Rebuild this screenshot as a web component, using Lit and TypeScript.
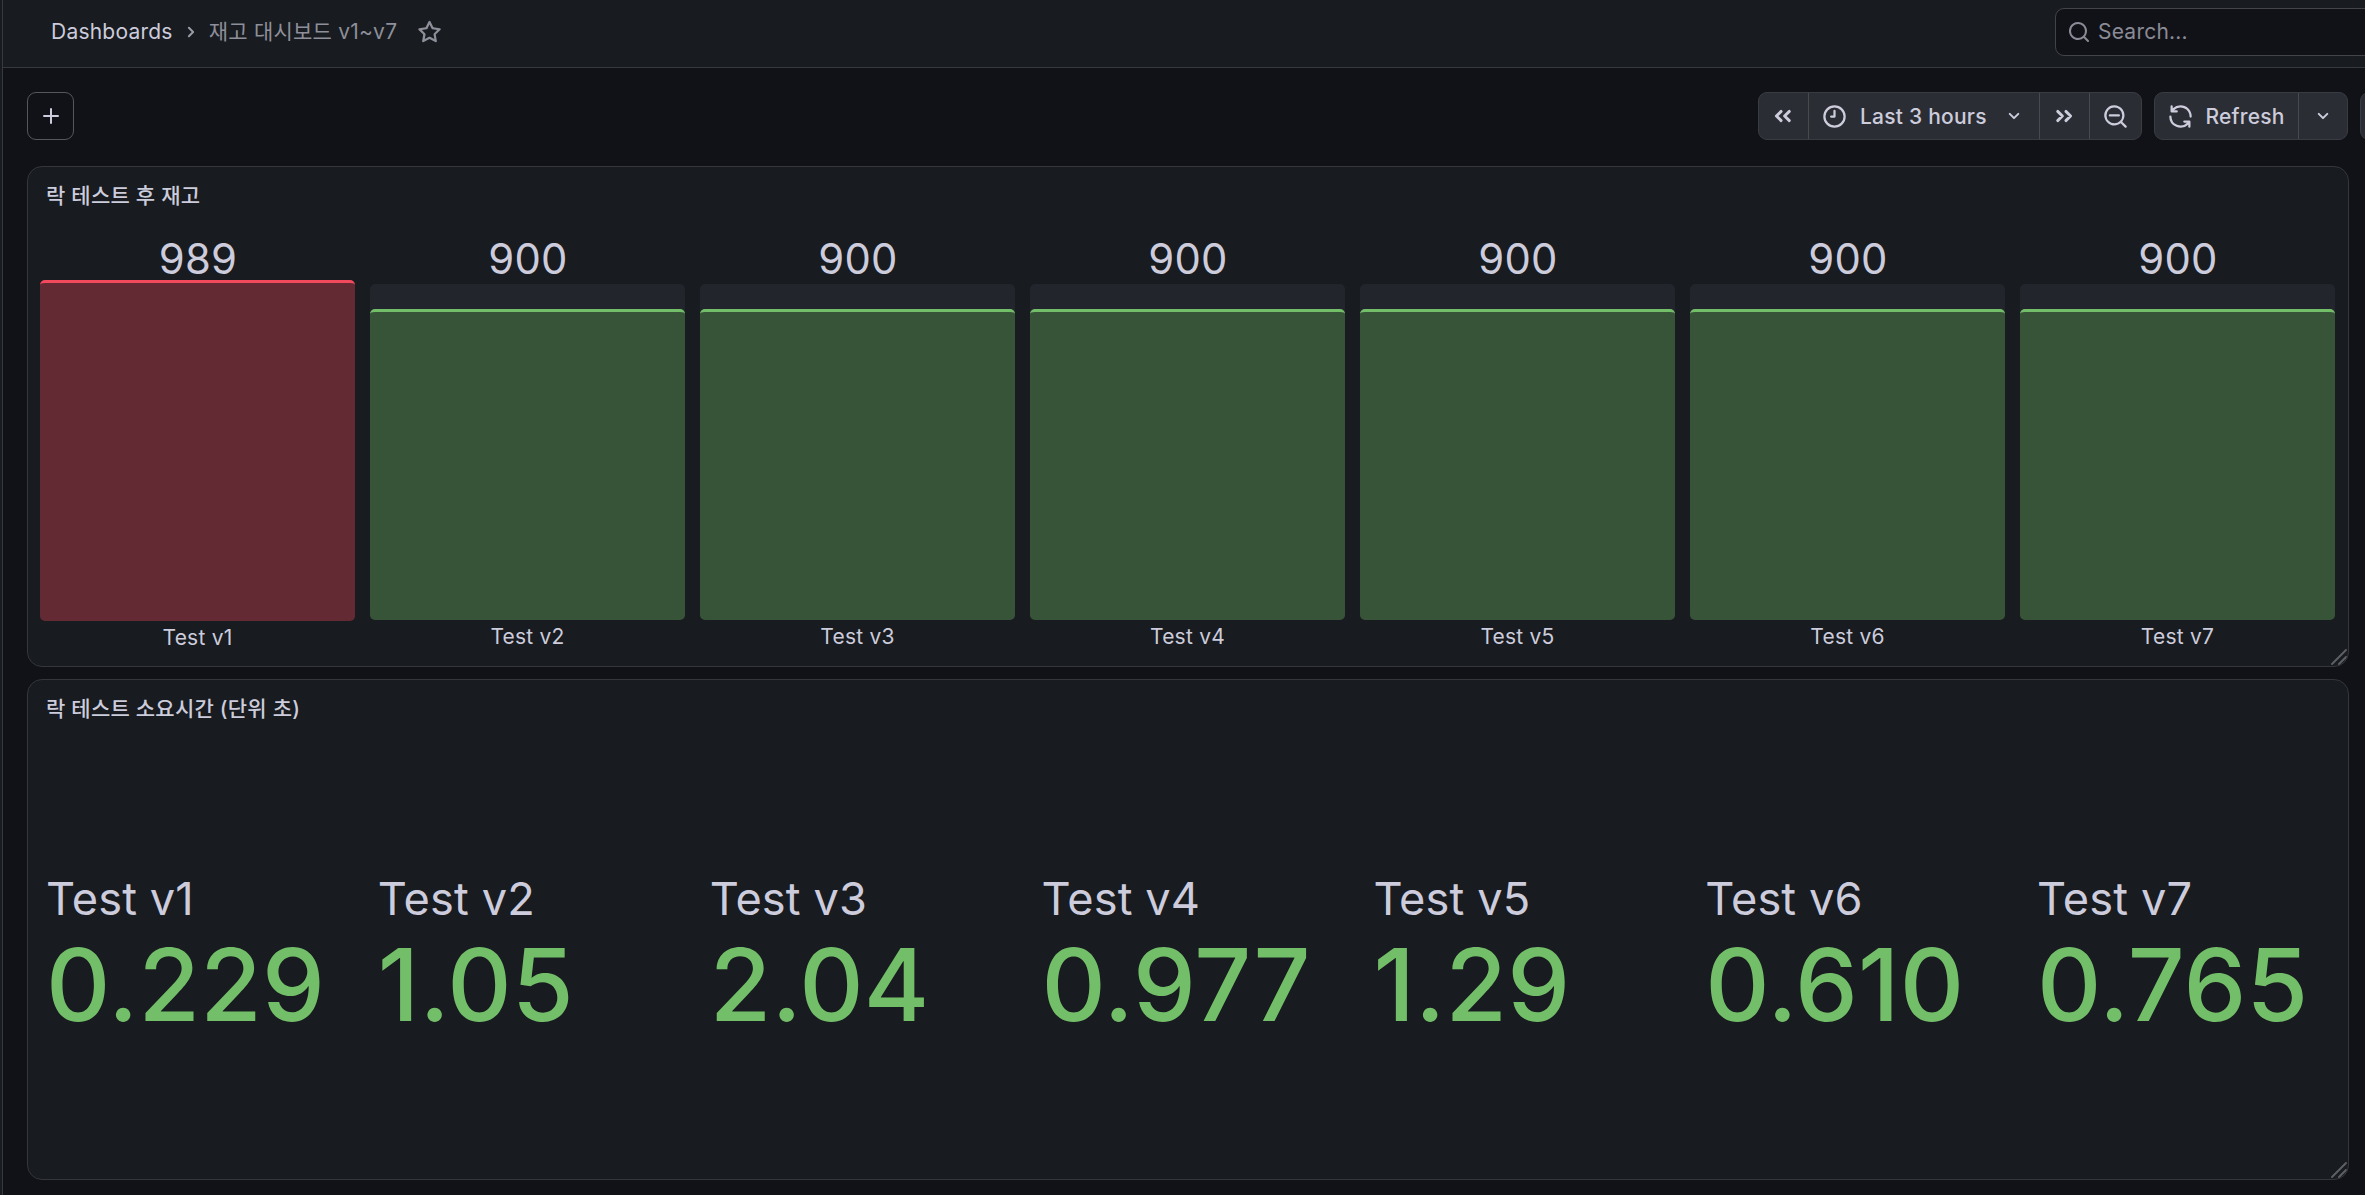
import { LitElement, html, css, svg } from "lit";
import { customElement, property } from "lit/decorators.js";
import { classMap } from "lit/directives/class-map.js";
import { styleMap } from "lit/directives/style-map.js";

const ICONS: Record<string, string> = {
  plus: "M19,11H13V5a1,1,0,0,0-2,0v6H5a1,1,0,0,0,0,2h6v6a1,1,0,0,0,2,0V13h6a1,1,0,0,0,0-2Z",
  star: "M22,9.67A1,1,0,0,0,21.14,9l-5.69-.83L12.9,3a1,1,0,0,0-1.8,0L8.55,8.16,2.86,9a1,1,0,0,0-.81.68,1,1,0,0,0,.25,1l4.13,4-1,5.68A1,1,0,0,0,6.9,21.44L12,18.77l5.1,2.67a.93.93,0,0,0,.46.12,1,1,0,0,0,.59-.19,1,1,0,0,0,.4-1l-1-5.68,4.13-4A1,1,0,0,0,22,9.67Zm-6.15,4a1,1,0,0,0-.29.88l.72,4.2-3.76-2a1.06,1.06,0,0,0-.94,0l-3.76,2,.72-4.2a1,1,0,0,0-.29-.88l-3-3,4.21-.61a1,1,0,0,0,.76-.55L12,5.7l1.88,3.82a1,1,0,0,0,.76.55l4.21.61Z",
  search: "M21.71,20.29,18,16.61A9,9,0,1,0,16.61,18l3.68,3.68a1,1,0,0,0,1.42,0A1,1,0,0,0,21.71,20.29ZM11,18a7,7,0,1,1,7-7A7,7,0,0,1,11,18Z",
  searchMinus: "M21.71,20.29,18,16.61A9,9,0,1,0,16.61,18l3.68,3.68a1,1,0,0,0,1.42,0A1,1,0,0,0,21.71,20.29ZM11,18a7,7,0,1,1,7-7A7,7,0,0,1,11,18Zm4-8H7a1,1,0,0,0,0,2h8a1,1,0,0,0,0-2Z",
  clock: "M12,6a1,1,0,0,0-1,1v4H9a1,1,0,0,0,0,2h3a1,1,0,0,0,1-1V7A1,1,0,0,0,12,6Zm0-4A10,10,0,1,0,22,12,10,10,0,0,0,12,2Zm0,18a8,8,0,1,1,8-8A8,8,0,0,1,12,20Z",
  angleDown: "M17,9.17a1,1,0,0,0-1.41,0L12,12.71,8.46,9.17a1,1,0,0,0-1.41,0,1,1,0,0,0,0,1.42l4.24,4.24a1,1,0,0,0,1.42,0L17,10.59A1,1,0,0,0,17,9.17Z",
  angleRight: "M14.83,11.29,10.59,7.05a1,1,0,0,0-1.42,0,1,1,0,0,0,0,1.41L12.71,12,9.17,15.54a1,1,0,0,0,0,1.41,1,1,0,0,0,.71.29,1,1,0,0,0,.71-.29l4.24-4.24A1,1,0,0,0,14.83,11.29Z",
  sync: "M19.91,15.51H15.38a1,1,0,0,0,0,2h2.4A8,8,0,0,1,4,12a1,1,0,1,0-2,0,10,10,0,0,0,16.88,7.23V21a1,1,0,0,0,2,0V16.5A1,1,0,0,0,19.91,15.51ZM12,2A10,10,0,0,0,5.12,4.77V3a1,1,0,0,0-2,0V7.5a1,1,0,0,0,1,1h4.5a1,1,0,0,0,0-2H6.22A8,8,0,0,1,20,12a1,1,0,0,0,2,0A10,10,0,0,0,12,2Z",
};

const STROKED: Record<string, string> = {
  doubleLeft: "M10.1 7.4 5.4 12l4.7 4.6M18.3 7.4 13.6 12l4.7 4.6",
  doubleRight: "M5.7 7.4 10.4 12l-4.7 4.6M13.9 7.4 18.6 12l-4.7 4.6",
};

const icon = (name: string, size: number) => svg`
  <svg class="icon" width=${size} height=${size} viewBox="0 0 24 24" aria-hidden="true">
    ${STROKED[name]
      ? svg`<path d=${STROKED[name]} fill="none" stroke="currentColor" stroke-width="2.9" stroke-linecap="round" stroke-linejoin="round"></path>`
      : svg`<path d=${ICONS[name]} fill="currentColor"></path>`}
  </svg>`;

interface Stock { label: string; value: number; over: boolean; }
interface Timing { label: string; value: string; }

const STOCKS: Stock[] = [989, 900, 900, 900, 900, 900, 900].map((value, i) => ({
  label: `Test v${i + 1}`,
  value,
  over: value > 900,
}));

const TIMINGS: Timing[] = ["0.229", "1.05", "2.04", "0.977", "1.29", "0.610", "0.765"].map(
  (value, i) => ({ label: `Test v${i + 1}`, value })
);

@customElement("dash-panel")
export class DashPanel extends LitElement {
  @property() heading = "";

  static styles = css`
    :host {
      position: relative;
      display: flex;
      flex-direction: column;
      box-sizing: border-box;
      background: #181b1f;
      border: 1px solid #34363b;
      border-radius: 15px;
      overflow: hidden;
    }
    .title {
      flex: none;
      height: 48px;
      margin: 4px 0 0 18px;
      line-height: 50px;
      font-size: 21px;
      font-weight: 500;
    }
    .body { flex: 1; display: flex; min-height: 0; }
    .grip { position: absolute; right: 0; bottom: 0; display: block; }
  `;

  render() {
    return html`
      <div class="title">${this.heading}</div>
      <div class="body"><slot></slot></div>
      <svg class="grip" width="18" height="18" viewBox="0 0 18 18">
        <path d="M2 16 16 2M9 16 16 9" stroke="#5e6066" stroke-width="1.9" stroke-linecap="round"></path>
      </svg>
    `;
  }
}

@customElement("app-root")
export class AppRoot extends LitElement {
  static styles = css`
    :host {
      display: flex;
      box-sizing: border-box;
      width: 2365px;
      height: 1195px;
      overflow: hidden;
      background: #111217;
      color: #ccccdc;
      font-family: Inter, "Noto Sans CJK KR", sans-serif;
      font-size: 21px;
      letter-spacing: 0.225px;
    }
    .icon { display: block; flex: none; }
    .rail { flex: none; width: 2px; background: #181b1f; border-right: 1px solid #37393e; }
    .main { flex: 1; min-width: 0; display: flex; flex-direction: column; }
    .header {
      flex: none;
      display: flex;
      align-items: center;
      height: 67px;
      padding-left: 48px;
      background: #181b1f;
      border-bottom: 1px solid #37393e;
    }
    .crumbs { display: flex; align-items: center; height: 63px; align-self: flex-start; line-height: 26px; }
    .sep { margin: 0 6px; color: #9a9ba6; }
    .current { color: #8e8f9a; }
    .fav { margin-left: 19px; color: #8e8f9a; }
    .search {
      display: flex;
      align-items: center;
      align-self: flex-start;
      box-sizing: border-box;
      width: 330px;
      height: 48px;
      margin: 8px -20px 0 auto;
      padding-left: 11px;
      gap: 7px;
      border: 1px solid #42444a;
      border-radius: 9px;
      background: #111217;
      color: #8a8b96;
    }
    .search-label { margin-bottom: 1px; }
    .toolbar {
      flex: none;
      display: flex;
      align-items: flex-start;
      height: 48px;
      padding: 24px 0 0 24px;
    }
    .add {
      display: flex;
      align-items: center;
      justify-content: center;
      box-sizing: border-box;
      width: 47px;
      height: 48px;
      border: 1px solid #55575e;
      border-radius: 9px;
    }
    .groups { display: flex; gap: 12px; margin: 0 -43px 0 auto; }
    .group {
      display: flex;
      box-sizing: border-box;
      height: 48px;
      border: 1px solid #3a3c43;
      border-radius: 9px;
      background: #2b2d34;
      overflow: hidden;
      font-weight: 500;
    }
    .btn { display: flex; align-items: center; justify-content: center; box-sizing: border-box; }
    .btn + .btn { border-left: 1px solid #484a50; }
    .step { width: 50px; padding-right: 1px; }
    .step:first-child { width: 49px; }
    .range { width: 231px; justify-content: flex-start; padding: 0 13px 0 12px; }
    .range-label { margin: 0 auto 0 12px; }
    .zoom { width: 52px; }
    .refresh { width: 143px; justify-content: flex-start; padding-left: 12px; }
    .refresh-label { margin-left: 11.5px; }
    .every { width: 49px; }
    .extra { width: 48px; }
    .panels {
      display: flex;
      flex-direction: column;
      gap: 12px;
      padding: 26px 16px 0 24px;
    }
    .stock { height: 501px; }
    .timing { height: 501px; }
    .bars { flex: 1; display: flex; gap: 15px; padding: 17px 13px 0 12px; align-items: flex-start; }
    .bar-col { flex: 1; display: flex; flex-direction: column; text-align: center; }
    .bar-value { height: 48px; line-height: 46px; padding-left: 1px; font-size: 41.8px; }
    .track {
      display: flex;
      flex-direction: column;
      justify-content: flex-end;
      box-sizing: border-box;
      height: 336px;
      border-radius: 5px;
      background: #22252b;
    }
    .fill { box-sizing: border-box; border-radius: 5px; background: #385438; border-top: 3px solid #73bf69; }
    .over .fill { background: #632a34; border-top-color: #f2495c; }
    .over .bar-value { height: 44px; }
    .over .track { height: 341px; }
    .bar-label { height: 34px; line-height: 34px; }
    .stats { flex: none; display: grid; grid-template-columns: repeat(7, 331.85px); padding: 133.5px 0 0 18px; }
    .stat-label { height: 66px; line-height: 66px; font-size: 45.2px; letter-spacing: 0.1px; }
    .stat-value {
      height: 106px;
      line-height: 106px;
      font-size: 99.8px;
      font-weight: 500;
      color: #73bf69;
    }
  `;

  private renderBar(s: Stock) {
    const height = s.over ? 341 : 311;
    return html`
      <div class=${classMap({ "bar-col": true, over: s.over })}>
        <div class="bar-value">${s.value}</div>
        <div class="track"><div class="fill" style=${styleMap({ height: `${height}px` })}></div></div>
        <div class="bar-label">${s.label}</div>
      </div>
    `;
  }

  render() {
    return html`
      <div class="rail"></div>
      <div class="main">
        <div class="header">
          <div class="crumbs">
            <span>Dashboards</span>
            <span class="sep">${icon("angleRight", 24)}</span>
            <span class="current">재고 대시보드 v1~v7</span>
            <span class="fav">${icon("star", 27)}</span>
          </div>
          <div class="search">${icon("search", 24)}<span class="search-label">Search...</span></div>
        </div>
        <div class="toolbar">
          <div class="add">${icon("plus", 24)}</div>
          <div class="groups">
            <div class="group">
              <div class="btn step">${icon("doubleLeft", 24)}</div>
              <div class="btn range">
                ${icon("clock", 27)}<span class="range-label">Last 3 hours</span>${icon("angleDown", 24)}
              </div>
              <div class="btn step">${icon("doubleRight", 24)}</div>
              <div class="btn zoom">${icon("searchMinus", 27)}</div>
            </div>
            <div class="group">
              <div class="btn refresh">${icon("sync", 27)}<span class="refresh-label">Refresh</span></div>
              <div class="btn every">${icon("angleDown", 24)}</div>
            </div>
            <div class="group extra"></div>
          </div>
        </div>
        <div class="panels">
          <dash-panel class="stock" heading="락 테스트 후 재고">
            <div class="bars">${STOCKS.map((s) => this.renderBar(s))}</div>
          </dash-panel>
          <dash-panel class="timing" heading="락 테스트 소요시간 (단위 초)">
            <div class="stats">
              ${TIMINGS.map(
                (t) => html`<div>
                  <div class="stat-label">${t.label}</div>
                  <div class="stat-value">${t.value}</div>
                </div>`
              )}
            </div>
          </dash-panel>
        </div>
      </div>
    `;
  }
}
